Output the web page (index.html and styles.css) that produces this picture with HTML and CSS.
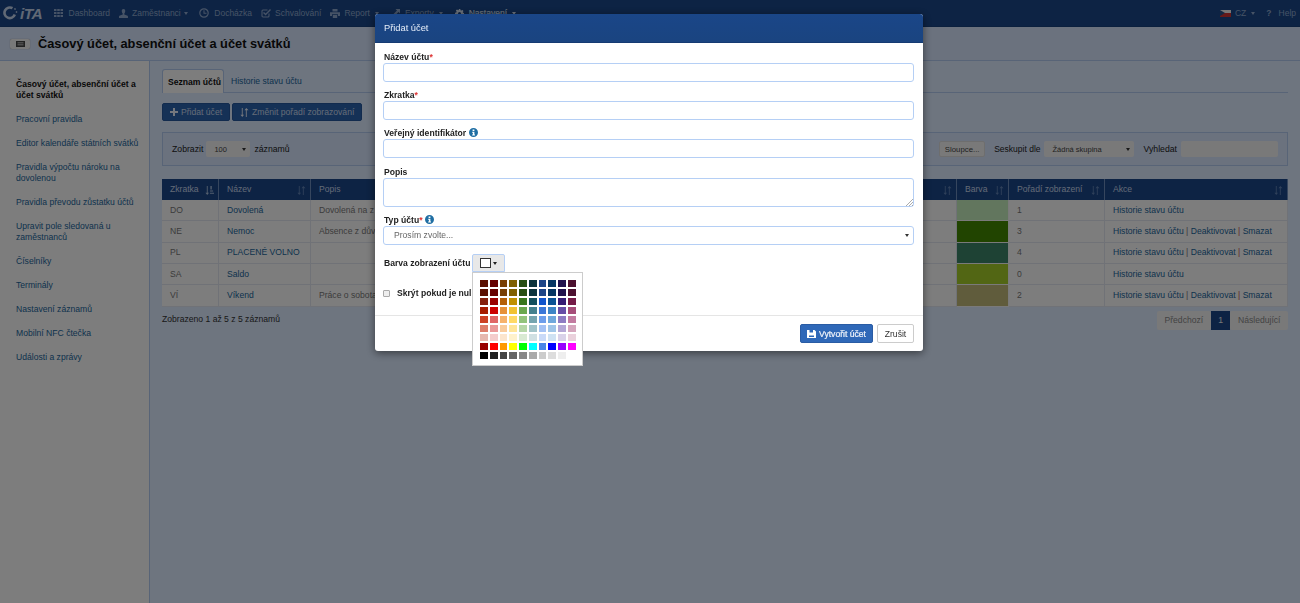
FILE: index.html
```html
<!DOCTYPE html>
<html lang="cs">

<head>
    <meta charset="UTF-8">
    <title>Časový účet, absenční účet a účet svátků</title>
    <link rel="stylesheet" href="styles.css">
</head>

<body>
    <svg class="defs" width="0" height="0">
        <symbol id="i-sort" viewBox="0 0 10 10"><path d="M2 0v7.500H.5L2.500 10l2-2.500H3V0zM7 0 5 2.500h1.500V10h1V2.500H9.500z"/></symbol>
        <symbol id="i-sort-asc" viewBox="0 0 10 10"><path d="M2 0v7.500H.5L2.500 10l2-2.500H3V0zM6 0h1.500v4H6zM5.500 5H9v1H5.500zM5.500 7.500H10v1H5.500z"/></symbol>
        <symbol id="i-info" viewBox="0 0 10 10"><path fill-rule="evenodd" d="M5 0a5 5 0 1 0 0 10A5 5 0 0 0 5 0zM4 1.800h2v1.500H4zM3.500 4.200H6v3h.700v1H3.500v-1h.800v-2h-.800z"/></symbol>
    </svg>

    <header class="topnav">
        <div class="logo">
            <svg width="17" height="14" viewBox="0 0 17 14"><path d="M9.500 2.200A5.300 5.300 0 1 0 11.800 8.500" fill="none" stroke="#c2d2ea" stroke-width="2.600"/><path d="M11.500 3.500l1-1M12.800 6h1.400" stroke="#c2d2ea" stroke-width="1.600"/></svg>
            <span class="logo-text">iTA</span>
        </div>
        <a class="nav-item nav-gap"><svg width="9" height="8" viewBox="0 0 9 8"><path d="M0 0h2.500v2H0zM3.200 0h2.600v2H3.200zM6.500 0H9v2H6.500zM0 3h2.500v2H0zM3.200 3h2.600v2H3.200zM6.500 3H9v2H6.500zM0 6h2.500v2H0zM3.200 6h2.600v2H3.200zM6.500 6H9v2H6.500z"/></svg>Dashboard</a>
        <a class="nav-item nav-staff"><svg width="9" height="9" viewBox="0 0 9 9"><path d="M4.500 0C3 0 2.600 1.200 2.800 2.600c.1.900.5 1.500.9 1.900v1L.4 6.800C0 7 0 7.500 0 9h9c0-1.500 0-2-.4-2.200L5.300 5.500v-1c.4-.4.800-1 .9-1.900C6.400 1.200 6 0 4.500 0z"/></svg>Zaměstnanci<i class="caret"></i></a>
        <a class="nav-item nav-gap"><svg width="10" height="10" viewBox="0 0 10 10"><circle cx="5" cy="5" r="4.200" fill="none" stroke="currentColor" stroke-width="1.200"/><path d="M4.500 2.200h1v2.500h2v1h-3z"/></svg>Docházka</a>
        <a class="nav-item"><svg width="10" height="10" viewBox="0 0 10 10"><path d="M8 5.500V8a1 1 0 0 1-1 1H2a1 1 0 0 1-1-1V3a1 1 0 0 1 1-1h4.500" fill="none" stroke="currentColor" stroke-width="1.100"/><path d="M3 4l1.600 1.600L9 1l1 1-5.400 5.500L2 5z"/></svg>Schvalování</a>
        <a class="nav-item nav-wide"><svg width="10" height="9" viewBox="0 0 10 9"><path d="M2.500 0h5v2.500h-5zM0 3.200h10V7H8V5.200H2V7H0zM2.800 6h4.400v3H2.800z"/></svg>Report<i class="caret"></i></a>
        <a class="nav-item nav-wide nav-exports"><svg width="7" height="8" viewBox="0 0 7 8"><path d="M2.500 0H7v4.500L5.500 3 2 6.500.5 5 4 1.500zM0 7h5v1H0z"/></svg>Exporty<i class="caret"></i></a>
        <a class="nav-item nav-wide nav-active"><svg width="9" height="9" viewBox="0 0 9 9"><path fill-rule="evenodd" d="M3.700 0h1.600l.2 1.300.8.300L7.400.9l1.100 1.100-.7 1.100.3.800L9 3.700v1.600l-1.300.2-.3.800.7 1.100-1.100 1.100-1.100-.7-.8.3L5.300 9H3.700l-.2-1.300-.8-.3-1.100.7L.5 7l.7-1.100-.3-.8L0 5.300V3.700l1.300-.2.300-.8L.9 1.600 2 .5l1.100.7.8-.3zM4.500 3a1.500 1.500 0 1 0 0 3 1.500 1.500 0 0 0 0-3z"/></svg>Nastavení<i class="caret"></i></a>
        <div class="nav-right">
            <a class="nav-item nav-wide"><span class="flag"></span>CZ<i class="caret"></i></a>
            <a class="nav-item nav-help"><b>?</b>Help</a>
        </div>
    </header>

    <div class="titlebar">
        <span class="title-icon"><svg width="9" height="6" viewBox="0 0 9 6"><path fill-rule="evenodd" d="M0 0h9v6H0zM1.500 1.500v.8h6v-.8zM1.500 3.500v.8h6v-.8z"/></svg></span>
        <h1>Časový účet, absenční účet a účet svátků</h1>
    </div>

    <div class="layout">
        <nav class="sidebar">
            <a class="side-link side-current">Časový účet, absenční účet a účet svátků</a>
            <a class="side-link">Pracovní pravidla</a>
            <a class="side-link">Editor kalendáře státních svátků</a>
            <a class="side-link">Pravidla výpočtu nároku na dovolenou</a>
            <a class="side-link">Pravidla převodu zůstatku účtů</a>
            <a class="side-link">Upravit pole sledovaná u zaměstnanců</a>
            <a class="side-link">Číselníky</a>
            <a class="side-link">Terminály</a>
            <a class="side-link">Nastavení záznamů</a>
            <a class="side-link">Mobilní NFC čtečka</a>
            <a class="side-link">Události a zprávy</a>
        </nav>

        <main class="content">
            <div class="tabs">
                <a class="tab tab-active">Seznam účtů</a>
                <a class="tab">Historie stavu účtu</a>
            </div>

            <div class="actions">
                <button class="btn-blue"><svg width="8" height="8" viewBox="0 0 8 8"><path d="M3 0h2v3h3v2H5v3H3V5H0V3h3z"/></svg>Přidat účet</button>
                <button class="btn-blue"><svg width="9" height="9"><use href="#i-sort"/></svg>Změnit pořadí zobrazování</button>
            </div>

            <div class="filters">
                <div class="filter-group">
                    <span>Zobrazit</span>
                    <span class="fake-select fs-length">100</span>
                    <span>záznamů</span>
                </div>
                <div class="filter-group">
                    <button class="btn-plain">Sloupce...</button>
                    <span class="group-label">Seskupit dle</span>
                    <span class="fake-select fs-group">Žádná skupina</span>
                    <span class="search-label">Vyhledat</span>
                    <span class="fake-input"></span>
                </div>
            </div>

            <table class="grid">
                <thead>
                    <tr>
                        <th class="col-short">Zkratka<svg width="9" height="9"><use href="#i-sort-asc"/></svg></th>
                        <th class="col-name">Název<svg width="9" height="9"><use href="#i-sort"/></svg></th>
                        <th class="col-desc">Popis<svg width="9" height="9"><use href="#i-sort"/></svg></th>
                        <th class="col-ident">Veřejný identifikátor<svg width="9" height="9"><use href="#i-sort"/></svg></th>
                        <th class="col-color">Barva<svg width="9" height="9"><use href="#i-sort"/></svg></th>
                        <th class="col-order">Pořadí zobrazení<svg width="9" height="9"><use href="#i-sort"/></svg></th>
                        <th class="col-actions">Akce<svg width="9" height="9"><use href="#i-sort"/></svg></th>
                    </tr>
                </thead>
                <tbody>
                    <tr>
                        <td>DO</td><td><a>Dovolená</a></td><td>Dovolená na z</td><td></td>
                        <td class="color-cell" style="background:#c4ecbc"></td><td>1</td>
                        <td><a>Historie stavu účtu</a></td>
                    </tr>
                    <tr>
                        <td>NE</td><td><a>Nemoc</a></td><td>Absence z dův</td><td></td>
                        <td class="color-cell" style="background:#428800"></td><td>3</td>
                        <td><a>Historie stavu účtu</a> <span class="sep">|</span> <a>Deaktivovat</a> <em>|</em> <a>Smazat</a></td>
                    </tr>
                    <tr>
                        <td>PL</td><td><a>PLACENÉ VOLNO</a></td><td></td><td></td>
                        <td class="color-cell" style="background:#3c8468"></td><td>4</td>
                        <td><a>Historie stavu účtu</a> <span class="sep">|</span> <a>Deaktivovat</a> <em>|</em> <a>Smazat</a></td>
                    </tr>
                    <tr>
                        <td>SA</td><td><a>Saldo</a></td><td></td><td></td>
                        <td class="color-cell" style="background:#a4cc28"></td><td>0</td>
                        <td><a>Historie stavu účtu</a></td>
                    </tr>
                    <tr>
                        <td>VÍ</td><td><a>Víkend</a></td><td>Práce o sobota</td><td></td>
                        <td class="color-cell" style="background:#c0b878"></td><td>2</td>
                        <td><a>Historie stavu účtu</a> <span class="sep">|</span> <a>Deaktivovat</a> <em>|</em> <a>Smazat</a></td>
                    </tr>
                </tbody>
            </table>

            <div class="table-foot">
                <span class="info">Zobrazeno 1 až 5 z 5 záznamů</span>
                <div class="pager">
                    <a>Předchozí</a>
                    <a class="pager-current">1</a>
                    <a>Následující</a>
                </div>
            </div>
        </main>
    </div>

    <div class="backdrop">
        <div class="modal">
            <div class="modal-head">Přidat účet</div>
            <form class="modal-body">
                <label>Název účtu<em>*</em></label>
                <span class="field"></span>
                <label>Zkratka<em>*</em></label>
                <span class="field"></span>
                <label>Veřejný identifikátor <svg class="info-icon" width="9" height="9"><use href="#i-info"/></svg></label>
                <span class="field field-last"></span>
                <label>Popis</label>
                <span class="field field-area"><svg width="7" height="7" viewBox="0 0 7 7"><path d="M0 7l7-7M3 7l4-4M6 7l1-1" stroke="#888" stroke-width=".7"/></svg></span>
                <label>Typ účtu<em>*</em> <svg class="info-icon" width="9" height="9"><use href="#i-info"/></svg></label>
                <span class="field field-select">Prosím zvolte...</span>
                <div class="color-row">
                    <label>Barva zobrazení účtu</label>
                    <span class="color-btn"><i class="color-box"></i><i class="caret"></i></span>
                    <div class="palette">
                        <i style="background:#5b0f00"></i><i style="background:#660000"></i><i style="background:#783f04"></i><i style="background:#7f6000"></i><i style="background:#274e13"></i><i style="background:#0c343d"></i><i style="background:#1c4587"></i><i style="background:#073763"></i><i style="background:#20124d"></i><i style="background:#4c1130"></i>
                        <i style="background:#5b0f00"></i><i style="background:#660000"></i><i style="background:#783f04"></i><i style="background:#7f6000"></i><i style="background:#274e13"></i><i style="background:#0c343d"></i><i style="background:#1c4587"></i><i style="background:#073763"></i><i style="background:#20124d"></i><i style="background:#4c1130"></i>
                        <i style="background:#85200c"></i><i style="background:#990000"></i><i style="background:#b45f06"></i><i style="background:#bf9000"></i><i style="background:#38761d"></i><i style="background:#134f5c"></i><i style="background:#1155cc"></i><i style="background:#0b5394"></i><i style="background:#351c75"></i><i style="background:#741b47"></i>
                        <i style="background:#a61c00"></i><i style="background:#cc0000"></i><i style="background:#e69138"></i><i style="background:#f1c232"></i><i style="background:#6aa84f"></i><i style="background:#45818e"></i><i style="background:#3c78d8"></i><i style="background:#3d85c6"></i><i style="background:#674ea7"></i><i style="background:#a64d79"></i>
                        <i style="background:#cc4125"></i><i style="background:#e06666"></i><i style="background:#f6b26b"></i><i style="background:#ffd966"></i><i style="background:#93c47d"></i><i style="background:#76a5af"></i><i style="background:#6d9eeb"></i><i style="background:#6fa8dc"></i><i style="background:#8e7cc3"></i><i style="background:#c27ba0"></i>
                        <i style="background:#dd7e6b"></i><i style="background:#ea9999"></i><i style="background:#f9cb9c"></i><i style="background:#ffe599"></i><i style="background:#b6d7a8"></i><i style="background:#a2c4c9"></i><i style="background:#a4c2f4"></i><i style="background:#9fc5e8"></i><i style="background:#b4a7d6"></i><i style="background:#d5a6bd"></i>
                        <i style="background:#e6b8af"></i><i style="background:#f4cccc"></i><i style="background:#fce5cd"></i><i style="background:#fff2cc"></i><i style="background:#d9ead3"></i><i style="background:#d0e0e3"></i><i style="background:#c9daf8"></i><i style="background:#cfe2f3"></i><i style="background:#d9d2e9"></i><i style="background:#ead1dc"></i>
                        <i style="background:#980000"></i><i style="background:#ff0000"></i><i style="background:#ff9900"></i><i style="background:#ffff00"></i><i style="background:#00ff00"></i><i style="background:#00ffff"></i><i style="background:#4a86e8"></i><i style="background:#0000ff"></i><i style="background:#9900ff"></i><i style="background:#ff00ff"></i>
                        <i style="background:#000000"></i><i style="background:#222222"></i><i style="background:#444444"></i><i style="background:#666666"></i><i style="background:#888888"></i><i style="background:#aaaaaa"></i><i style="background:#cccccc"></i><i style="background:#dddddd"></i><i style="background:#eeeeee"></i><i style="background:#ffffff"></i>
                    </div>
                </div>
                <div class="check-row">
                    <span class="checkbox"></span>
                    <label>Skrýt pokud je nul</label>
                </div>
            </form>
            <div class="modal-foot">
                <button class="btn-save"><svg width="9" height="8" viewBox="0 0 9 8"><path fill-rule="evenodd" d="M0 0h7.500L9 1.500V8H0zM2.500 0v2.500h3.500V0zM2 5.500V7h5V5.500z"/></svg>Vytvořit účet</button>
                <button class="btn-cancel">Zrušit</button>
            </div>
        </div>
    </div>
</body>

</html>
```

FILE: styles.css
```css
* {
    box-sizing: border-box;
}

html, body {
    height: 100%;
}

body {
    margin: 0;
    overflow: hidden;
    display: flex;
    flex-direction: column;
    background: #dceaff;
    color: #222;
    font-family: "Liberation Sans", Arial, sans-serif;
    font-size: 8.6px;
    line-height: 11px;
}

a {
    color: #1a659a;
    text-decoration: none;
}

button {
    font-family: inherit;
    font-size: inherit;
}

.defs {
    position: absolute;
}

.caret {
    display: inline-block;
    width: 0;
    height: 0;
    margin-left: 3px;
    border-left: 2.5px solid transparent;
    border-right: 2.5px solid transparent;
    border-top: 3px solid currentColor;
    vertical-align: middle;
}

/* top bar */
.topnav {
    height: 27px;
    flex: none;
    display: flex;
    align-items: center;
    padding-left: 3px;
    background: #1a4688;
    border-bottom: 1px solid #17407c;
}

.logo {
    width: 51px;
    display: flex;
    align-items: center;
}

.logo-text {
    color: #c2d2ea;
    font-size: 15.5px;
    font-weight: bold;
    font-style: italic;
    letter-spacing: -.6px;
}

.nav-item {
    display: flex;
    align-items: center;
    margin-right: 9px;
    color: #8da6cc;
    font-size: 8.5px;
    white-space: nowrap;
}

.nav-item svg {
    margin-right: 4px;
    fill: #8da6cc;
}

.nav-gap svg {
    margin-right: 5.5px;
}

.nav-staff {
    margin-right: 11px;
}

.nav-wide .caret {
    margin-left: 5px;
}

.nav-exports {
    margin-left: 5px;
    margin-right: 12px;
}

.nav-exports svg {
    margin-right: 5px;
}

.nav-active {
    color: #d5e2f5;
    -webkit-text-stroke: .15px #d5e2f5;
}

.nav-active svg {
    margin-right: 5px;
    fill: #d5e2f5;
}

.nav-right {
    margin-left: auto;
    display: flex;
    align-items: center;
}

.nav-right .nav-item {
    margin-right: 4px;
}

.nav-right .nav-help {
    margin-left: 7px;
}

.nav-help b {
    margin-right: 7px;
}

.flag {
    width: 11px;
    height: 7px;
    margin-right: 4px;
    background: linear-gradient(#eee 50%, #c33 50%);
    overflow: hidden;
}

.flag::before {
    content: "";
    display: block;
    width: 0;
    height: 0;
    border-top: 3.5px solid transparent;
    border-bottom: 3.5px solid transparent;
    border-left: 5px solid #26508a;
}

/* page title */
.titlebar {
    height: 34px;
    flex: none;
    display: flex;
    align-items: center;
    padding-left: 10px;
    background: #d6e4fc;
    border-bottom: 1px solid #b0c8ee;
}

.title-icon {
    width: 20px;
    height: 10px;
    margin-right: 8px;
    display: flex;
    align-items: center;
    justify-content: center;
    background: #f2f2f2;
    border-radius: 2px;
    box-shadow: 0 0 1px #888;
}

.title-icon svg {
    fill: #444;
}

.titlebar h1 {
    margin: 0;
    font-size: 12.8px;
    line-height: 14px;
    color: #111;
}

.layout {
    flex: 1;
    display: flex;
    min-height: 0;
}

/* side menu */
.sidebar {
    width: 150px;
    flex: none;
    display: flex;
    flex-direction: column;
    gap: 13px;
    padding: 17.5px 8px 0 16px;
    background: #fafafa;
    border-right: 1px solid #b0c8ee;
}

.side-link {
    display: block;
}

.side-current {
    color: #111;
    font-weight: bold;
}

/* content column */
.content {
    flex: 1;
    min-width: 0;
    padding: 8px 12px 0;
}

.tabs {
    height: 24px;
    display: flex;
    border-bottom: 1px solid #b0c8ee;
}

.tab {
    height: 24px;
    padding: 7px 7px 0;
    white-space: nowrap;
}

.tab-active {
    width: 62px;
    padding-left: 5px;
    color: #111;
    font-weight: bold;
    background: #fafafa;
    border: 1px solid #b0c8ee;
    border-bottom: 0;
    border-radius: 3px 3px 0 0;
}

.actions {
    display: flex;
    gap: 2px;
    margin-top: 10px;
}

.btn-blue {
    height: 18px;
    padding: 0 7px;
    display: flex;
    align-items: center;
    gap: 3px;
    color: #c9d8ee;
    background: #2a62ad;
    border: 1px solid #24579c;
    border-radius: 2px;
}

.btn-blue svg {
    fill: #e8eefa;
}

.filters {
    height: 34px;
    margin-top: 11px;
    padding: 0 9px;
    display: flex;
    align-items: center;
    justify-content: space-between;
    background: #d6e4fc;
    border: 1px solid #b0c8ee;
    font-size: 8.7px;
}

.filter-group {
    display: flex;
    align-items: center;
}

.fake-select {
    position: relative;
    height: 16px;
    display: flex;
    align-items: center;
    background: #f2f2f2;
    color: #444;
    border-radius: 2px;
    font-size: 7.5px;
}

.fake-select::after {
    content: "";
    position: absolute;
    right: 4px;
    top: 7px;
    border-left: 2.5px solid transparent;
    border-right: 2.5px solid transparent;
    border-top: 3.5px solid #333;
}

.fs-length {
    width: 44px;
    margin: 0 4px 0 3px;
    padding-left: 8px;
}

.fs-group {
    width: 90px;
    margin-left: 3px;
    padding-left: 9px;
}

.btn-plain {
    width: 46px;
    height: 16px;
    padding: 0;
    color: #444;
    background: #f2f2f2;
    border: 1px solid #ddd;
    border-radius: 2px;
    font-size: 7.8px;
}

.group-label {
    margin-left: 9px;
    font-size: 8.5px;
}

.search-label {
    margin-left: 10px;
}

.fake-input {
    width: 97px;
    height: 16px;
    margin-left: 4px;
    background: #f2f2f2;
    border-radius: 2px;
}

/* accounts table */
.grid {
    width: 100%;
    margin-top: 13px;
    table-layout: fixed;
    border-collapse: separate;
    border-spacing: 0;
    background: #fbfbfb;
}

.grid th {
    position: relative;
    height: 21px;
    padding: 0 8px;
    color: #c6d5ec;
    font-weight: normal;
    text-align: left;
    white-space: nowrap;
    background: #1a4688;
    border-right: 1px solid #6d8dbd;
}

.grid th svg {
    position: absolute;
    right: 4px;
    top: 7px;
    fill: #5d7fb3;
}

.grid th.col-short svg {
    fill: #a9bedd;
}

.grid td {
    height: 21.34px;
    padding: 0 8px;
    color: #777;
    white-space: nowrap;
    overflow: hidden;
    border-right: 1px solid #e0e4ee;
    border-bottom: 1px solid #e0e4ee;
}

.grid td .sep {
    color: #777;
}

.grid td em {
    color: #c05050;
    font-style: normal;
}

.grid td.color-cell {
    border-color: #f4f4f4;
    border-width: 0 1px 1px 1px;
}

.col-short {
    width: 57px;
}

.col-name {
    width: 92px;
}

.col-color {
    width: 52px;
}

.col-order {
    width: 96px;
}

.col-actions {
    width: 183px;
}

.col-ident {
    width: 200px;
}

.table-foot {
    display: flex;
    justify-content: space-between;
    margin-top: 4px;
}

.info {
    margin-top: 3px;
    color: #333;
}

.pager {
    height: 19px;
    display: flex;
}

.pager a {
    padding: 0 7.5px;
    display: flex;
    align-items: center;
    color: #888;
    background: #f2f2f2;
    border-radius: 2px;
}

.pager .pager-current {
    color: #eee;
    background: #1a4688;
    border-radius: 0;
}

/* dialog */
.backdrop {
    position: fixed;
    left: 0;
    top: 0;
    right: 0;
    bottom: 0;
    background: rgba(0, 0, 0, .5);
}

.modal {
    width: 548px;
    height: 337px;
    margin: 14px 0 0 375px;
    display: flex;
    flex-direction: column;
    background: #fff;
    border-radius: 3px;
    box-shadow: 0 2px 8px rgba(0, 0, 0, .5);
}

.modal-head {
    height: 29px;
    flex: none;
    padding: 9px 9px 0;
    color: #e6eef9;
    font-size: 9.3px;
    background: linear-gradient(#1a4688, #1a4480);
    border-bottom: 1px solid #153b72;
    border-radius: 3px 3px 0 0;
}

.modal-body {
    flex: 1;
    padding: 8px 9px 0 8px;
}

.modal-body label {
    display: block;
    height: 12px;
    padding: 1px 0 0 1px;
    color: #222;
    font-weight: bold;
    white-space: nowrap;
}

.modal-body label em {
    color: #d33;
    font-style: normal;
}

.info-icon {
    vertical-align: -1px;
    fill: #1f6ea3;
}

.field {
    display: block;
    height: 19px;
    margin: 0 0 7px;
    border: 1px solid #b5cff5;
    border-radius: 3px;
}

.field-last {
    margin-bottom: 8px;
}

.field-area {
    position: relative;
    height: 29px;
}

.field-area svg {
    position: absolute;
    right: 0;
    bottom: 0;
}

.field-select {
    position: relative;
    margin-bottom: 9px;
    padding: 3px 0 0 10px;
    color: #666;
}

.field-select::after {
    content: "";
    position: absolute;
    right: 4px;
    top: 7px;
    border-left: 2.5px solid transparent;
    border-right: 2.5px solid transparent;
    border-top: 3.5px solid #333;
}

.color-row {
    position: relative;
    display: flex;
    align-items: center;
    height: 18px;
}

.color-btn {
    width: 33px;
    height: 18px;
    margin-left: 2px;
    display: flex;
    align-items: center;
    justify-content: center;
    background: #e8e8e8;
    border: 1px solid #b5cff5;
    border-radius: 2px 2px 0 0;
}

.color-box {
    width: 11px;
    height: 10px;
    background: #fff;
    border: 1px solid #333;
}

.color-btn .caret {
    margin-left: 2px;
}

.palette {
    position: absolute;
    left: 89px;
    top: 18px;
    width: 111px;
    height: 94px;
    padding: 6px 6px 0;
    display: grid;
    grid-template-columns: repeat(10, 9.75px);
    grid-auto-rows: 9.05px;
    background: #fff;
    border: 1px solid #ccc;
    z-index: 2;
}

.palette i {
    border: .5px solid #fff;
}

.check-row {
    display: flex;
    align-items: center;
    margin-top: 15px;
}

.checkbox {
    width: 7px;
    height: 7px;
    margin-right: 6px;
    background: #eee;
    border: 1px solid #aaa;
    border-radius: 1px;
}

.modal-foot {
    height: 36px;
    flex: none;
    padding: 8px 9px 0;
    display: flex;
    justify-content: flex-end;
    gap: 4px;
    border-top: 1px solid #e5e5e5;
}

.btn-save {
    width: 73px;
    height: 19px;
    padding: 0;
    display: flex;
    align-items: center;
    justify-content: center;
    gap: 3px;
    color: #f2f5fb;
    -webkit-text-stroke: .2px #f2f5fb;
    background: #2f68b8;
    border: 1px solid #2a5ca4;
    border-radius: 2px;
}

.btn-save svg {
    fill: #fff;
}

.btn-cancel {
    width: 37px;
    height: 19px;
    padding: 0;
    color: #333;
    background: #fff;
    border: 1px solid #ccc;
    border-radius: 2px;
}
```
